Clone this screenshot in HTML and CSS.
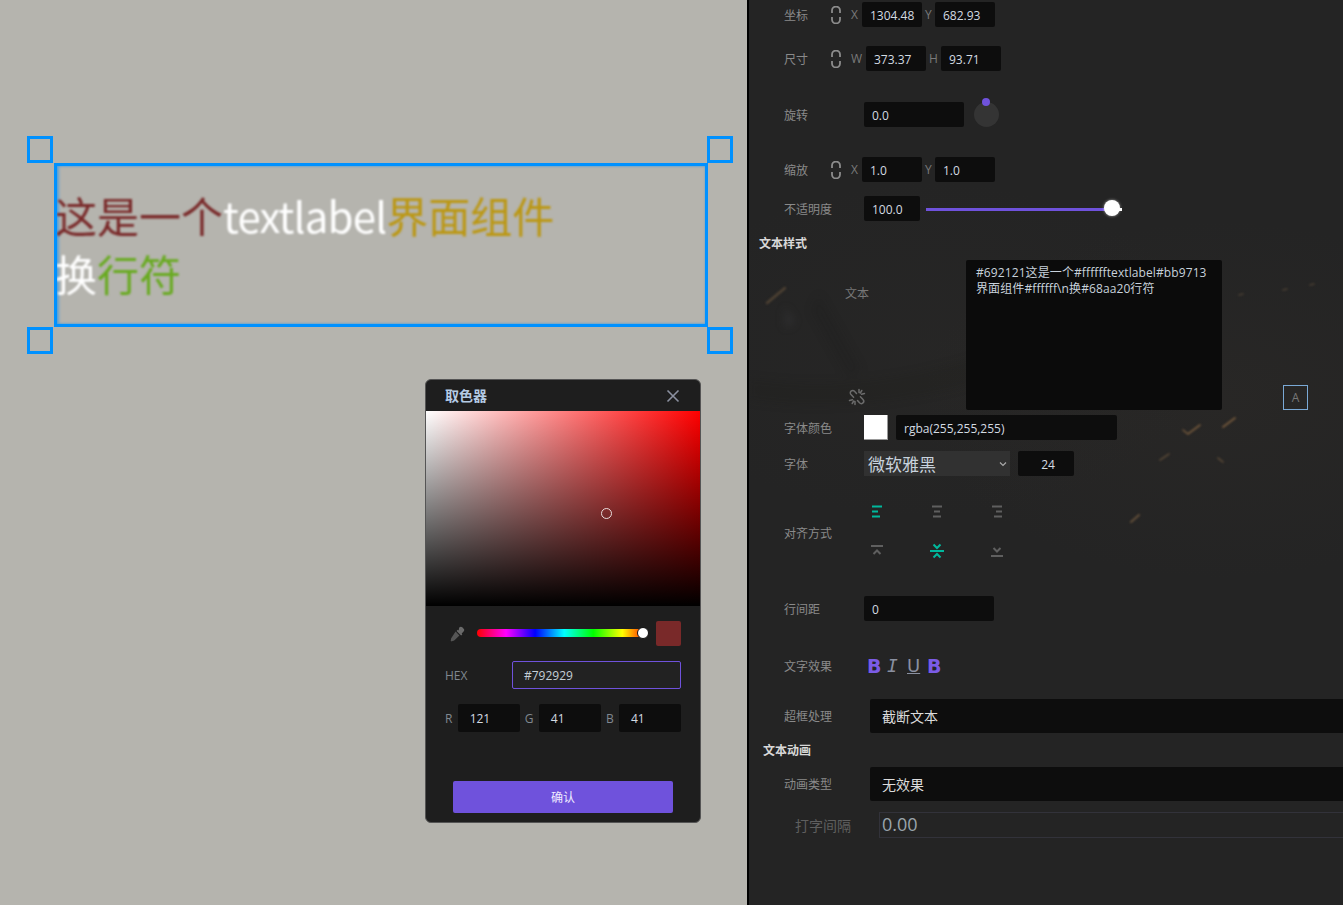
FILE: index.html
```html
<!DOCTYPE html>
<html lang="zh-CN">
<head>
    <meta charset="UTF-8">
    <meta name="viewport" content="width=device-width, initial-scale=1.0">
    <title>文本属性</title>
    <link rel="stylesheet" href="styles.css">
</head>
<body>
    <div class="app">
        <div class="canvas">
            <!-- selected label on the stage -->
            <div class="label-box">
                <p class="label-text"><span class="c-red">这是一个</span><span class="c-white latin">textlabel</span><span class="c-gold">界面组件</span><br><span class="c-white">换</span><span class="c-green">行符</span></p>
            </div>
            <span class="handle handle-tl"></span>
            <span class="handle handle-tr"></span>
            <span class="handle handle-bl"></span>
            <span class="handle handle-br"></span>

            <!-- colour picker window -->
            <div class="picker">
                <div class="picker-head">
                    <span class="picker-title">取色器</span>
                    <svg class="picker-close" width="14" height="14" viewBox="0 0 14 14"><path d="M1.500 1.500l11 11M12.500 1.500l-11 11" stroke="#8b90a0" stroke-width="1.600" fill="none"/></svg>
                </div>
                <div class="sv-area"><span class="sv-cursor"></span></div>
                <div class="picker-body">
                    <div class="hue-row">
                        <svg class="dropper" width="16" height="16" viewBox="0 0 16 16"><path d="M10.200 1.600a2.400 2.400 0 0 1 3.400 0l.8.8a2.400 2.400 0 0 1 0 3.400l-1.700 1.700.6.9-1.200 1.100-4.500-4.500 1.100-1.200.9.6z" fill="#6a6a6a"/><path d="M6.600 5.600l3.800 3.800-4.900 4.900c-.5.500-1.200.7-1.900.7l-1.100.4-.9-.9.4-1.100c0-.7.2-1.400.7-1.900z" fill="#555"/></svg>
                        <div class="hue-bar"><span class="hue-knob"></span></div>
                        <span class="swatch-now"></span>
                    </div>
                    <div class="hex-row">
                        <span class="pick-label">HEX</span>
                        <div class="hex-input">#792929</div>
                    </div>
                    <div class="rgb-row">
                        <span class="pick-label">R</span><div class="rgb-input">121</div>
                        <span class="pick-label">G</span><div class="rgb-input">41</div>
                        <span class="pick-label">B</span><div class="rgb-input">41</div>
                    </div>
                    <button class="confirm">确认</button>
                </div>
            </div>
        </div>

        <div class="panel">
            <svg class="panel-art" width="594" height="320" viewBox="0 0 594 320">
                <g class="art-shapes">
                    <path d="M70 45L112 120L100 128L62 60z" fill="#171513" opacity="0.15"/>
                    <path d="M36 57L46 72L36 78z" fill="#45464a" opacity="0.3"/>
                    <path d="M0 128Q140 150 300 80V110Q140 170 0 150z" fill="#1c1917" opacity="0.15"/>
                </g>
                <g class="art-sparks" fill="none" stroke-linecap="round">
                    <path d="M18 53L36 38" stroke="#4f4233" stroke-width="2.500"/>
                    <path d="M434 180l5 4 12-9" stroke="#75593c" stroke-width="1.600"/>
                    <path d="M474 177l12-9" stroke="#75593c" stroke-width="1.800"/>
                    <path d="M411 210l9-6" stroke="#64503a" stroke-width="1.500"/>
                    <path d="M469 208l5 4" stroke="#64503a" stroke-width="1.500"/>
                    <path d="M382 272l8-7" stroke="#64503a" stroke-width="2"/>
                    <path d="M490 45l4-1M534 40l4-1M561 35l4-1" stroke="#4a4034" stroke-width="1.500"/>
                </g>
            </svg>

            <div class="row row-pos">
                <span class="row-label">坐标</span>
                <svg class="link" width="10" height="18" viewBox="0 0 10 18"><path d="M1 7V4.500a4 4 0 0 1 8 0V7M1 11v2.500a4 4 0 0 0 8 0V11" fill="none" stroke="#8c8c8c" stroke-width="1.800"/></svg>
                <span class="axis">X</span><div class="field f60">1304.48</div>
                <span class="axis axis-y">Y</span><div class="field f60">682.93</div>
            </div>
            <div class="row row-size">
                <span class="row-label">尺寸</span>
                <svg class="link" width="10" height="18" viewBox="0 0 10 18"><path d="M1 7V4.500a4 4 0 0 1 8 0V7M1 11v2.500a4 4 0 0 0 8 0V11" fill="none" stroke="#8c8c8c" stroke-width="1.800"/></svg>
                <span class="axis axis-w">W</span><div class="field f60">373.37</div>
                <span class="axis axis-h">H</span><div class="field f60">93.71</div>
            </div>
            <div class="row row-rotate">
                <span class="row-label">旋转</span>
                <div class="field f100">0.0</div>
                <div class="dial"><span class="dial-dot"></span></div>
            </div>
            <div class="row row-scale">
                <span class="row-label">缩放</span>
                <svg class="link" width="10" height="18" viewBox="0 0 10 18"><path d="M1 7V4.500a4 4 0 0 1 8 0V7M1 11v2.500a4 4 0 0 0 8 0V11" fill="none" stroke="#8c8c8c" stroke-width="1.800"/></svg>
                <span class="axis">X</span><div class="field f60">1.0</div>
                <span class="axis axis-y">Y</span><div class="field f60">1.0</div>
            </div>
            <div class="row row-opacity">
                <span class="row-label">不适明度</span>
                <div class="field f56">100.0</div>
                <div class="slider"><span class="slider-knob"></span></div>
            </div>

            <div class="section section-style">文本样式</div>

            <div class="text-row">
                <div class="text-side">
                    <span class="text-label">文本</span>
                    <svg class="unlink" width="18" height="18" viewBox="0 0 18 18"><g fill="none" stroke="#6b6b6b" stroke-width="1.500" stroke-linecap="round"><path d="M8.500 5.500L6.500 3.200a2.400 2.400 0 0 0-3.500 3.400l2.600 2.600"/><path d="M9.500 12.500l2 2.300a2.400 2.400 0 0 0 3.500-3.400l-2.600-2.600"/><path d="M11 1.500v3M13.800 2.500l-1.500 2.500M16.500 5.500l-3 .8"/><path d="M7 16.500v-3M4.200 15.500l1.500-2.500M1.500 12.500l3-.8"/></g></svg>
                </div>
                <div class="text-area">#692121这是一个#fffffftextlabel#bb9713<br>界面组件#ffffff\n换#68aa20行符</div>
                <span class="a-btn">A</span>
            </div>

            <div class="row row-color">
                <span class="row-label">字体颜色</span>
                <span class="color-swatch"></span>
                <div class="field f221">rgba(255,255,255)</div>
            </div>
            <div class="row row-font">
                <span class="row-label">字体</span>
                <div class="font-select">微软雅黑
                    <svg width="8" height="6" viewBox="0 0 8 6"><path d="M1 1.500l3 3 3-3" fill="none" stroke="#aaa" stroke-width="1.200"/></svg>
                </div>
                <div class="field f56 center">24</div>
            </div>

            <div class="row row-align">
                <span class="row-label">对齐方式</span>
                <div class="align-grid">
                    <svg class="ic on" width="14" height="16" viewBox="0 0 14 16"><path d="M2 2.500h10M2 7.500h6M2 12.500h8"/></svg>
                    <svg class="ic" width="14" height="16" viewBox="0 0 14 16"><path d="M2 2.500h10M4 7.500h6M3 12.500h8"/></svg>
                    <svg class="ic" width="14" height="16" viewBox="0 0 14 16"><path d="M2 2.500h10M6 7.500h6M4 12.500h8"/></svg>
                    <svg class="ic" width="14" height="16" viewBox="0 0 14 16"><path d="M1 3h12M3.500 11l3.500-3.500 3.500 3.500"/></svg>
                    <svg class="ic on" width="16" height="16" viewBox="0 0 16 16"><path d="M1 8h14M4.500 1.500l3.500 3.500 3.500-3.500M4.500 14.500l3.500-3.500 3.500 3.500"/></svg>
                    <svg class="ic" width="14" height="16" viewBox="0 0 14 16"><path d="M1 13h12M3.500 5l3.500 3.500 3.500-3.500"/></svg>
                </div>
            </div>

            <div class="row row-spacing">
                <span class="row-label">行间距</span>
                <div class="field f130">0</div>
            </div>

            <div class="row row-effect">
                <span class="row-label">文字效果</span>
                <div class="effects">
                    <span class="fx fx-on">B</span>
                    <span class="fx fx-i">I</span>
                    <span class="fx fx-u">U</span>
                    <span class="fx fx-on">B</span>
                </div>
            </div>

            <div class="row row-overflow">
                <span class="row-label wide">超框处理</span>
                <div class="wide-field">截断文本</div>
            </div>

            <div class="section section-anim">文本动画</div>

            <div class="row row-anim">
                <span class="row-label wide">动画类型</span>
                <div class="wide-field">无效果</div>
            </div>
            <div class="row row-interval">
                <span class="interval-label">打字间隔</span>
                <div class="interval-field">0.00</div>
            </div>
        </div>
    </div>
</body>
</html>
```
FILE: styles.css
```css
* {
    box-sizing: border-box;
}

html, body {
    margin: 0;
    height: 100%;
    overflow: hidden;
}

body {
    font-family: "Open Sans", "Noto Sans CJK SC", sans-serif;
    font-size: 12px;
    color: #d4dbe2;
}

.app {
    display: flex;
    height: 905px;
}

/* Stage */
.canvas {
    position: relative;
    width: 747px;
    flex: none;
    background-color: #b5b4ae;
}

.label-box {
    position: absolute;
    left: 54px;
    top: 163px;
    width: 654px;
    height: 164px;
    border: 3px solid #0091ff;
    box-shadow: inset 2px 0 3px rgba(0, 145, 255, 0.45), inset 0 0 2px rgba(0, 145, 255, 0.5);
    overflow: hidden;
}

.label-text {
    margin: 20px 0 0 -2px;
    font-family: "Noto Sans CJK SC", sans-serif;
    font-size: 42px;
    line-height: 58px;
    filter: blur(0.8px);
    white-space: nowrap;
}

.latin { letter-spacing: -0.8px; }

.c-red { color: #792929; }
.c-white { color: #fff; }
.c-gold { color: #bb9713; }
.c-green { color: #68aa20; }

.handle {
    position: absolute;
    width: 26px;
    height: 27px;
    border: 3px solid #0091ff;
}

.handle-tl { left: 27px; top: 136px; }
.handle-tr { left: 707px; top: 136px; }
.handle-bl { left: 27px; top: 327px; }
.handle-br { left: 707px; top: 327px; }

/* Colour picker */
.picker {
    position: absolute;
    left: 425px;
    top: 379px;
    width: 276px;
    height: 444px;
    background-color: #1e1e1e;
    border: 1px solid #555;
    border-radius: 6px;
    overflow: hidden;
}

.picker-head {
    display: flex;
    align-items: center;
    justify-content: space-between;
    height: 31px;
    padding: 0 20px 0 19px;
}

.picker-title {
    margin-top: -2px;
    font-size: 14px;
    font-weight: 700;
    font-family: "Noto Sans CJK SC", sans-serif;
    color: #b4cbe4;
}

.sv-area {
    position: relative;
    height: 195px;
    background:
        linear-gradient(to bottom, rgba(0, 0, 0, 0), #000),
        linear-gradient(to right, #fff, #f00);
}

.sv-cursor {
    position: absolute;
    left: 175px;
    top: 97px;
    width: 11px;
    height: 11px;
    border: 1px solid #e9dcdc;
    border-radius: 50%;
}

.picker-body {
    padding: 15px 19px 0;
}

.hue-row {
    display: flex;
    align-items: center;
    height: 25px;
}

.dropper {
    margin-left: 4px;
    flex: none;
}

.hue-bar {
    position: relative;
    width: 171px;
    height: 8px;
    margin: -1px 0 0 12px;
    border-radius: 4px;
    background: linear-gradient(to right, #f00, #f0f 17%, #00f 34%, #0ff 51%, #0f0 68%, #ff0 85%, #f00);
}

.hue-knob {
    position: absolute;
    right: -1px;
    top: -2px;
    width: 12px;
    height: 12px;
    background-color: #fff;
    border: 1px solid #111;
    border-radius: 50%;
}

.swatch-now {
    width: 25px;
    height: 25px;
    margin-left: 8px;
    background-color: #792929;
    border-radius: 2px;
}

.hex-row {
    display: flex;
    align-items: center;
    justify-content: space-between;
    margin-top: 15px;
}

.pick-label {
    color: #808890;
}

.hex-input {
    width: 169px;
    height: 28px;
    padding-left: 11px;
    line-height: 28px;
    color: #c5cfd8;
    background-color: #222;
    border: 1px solid #6f52dc;
    border-radius: 2px;
}

.rgb-row {
    display: flex;
    align-items: center;
    justify-content: space-between;
    margin-top: 15px;
}

.rgb-input {
    width: 62px;
    height: 28px;
    padding-left: 12px;
    line-height: 30px;
    color: #d4dbe2;
    background-color: #0d0d0d;
    border-radius: 2px;
}

.confirm {
    display: block;
    width: 220px;
    height: 32px;
    margin: 49px 0 0 8px;
    padding: 0 0 2px;
    border: none;
    border-radius: 2px;
    background-color: #6f52dc;
    color: #f0ecff;
    font-family: "Noto Sans CJK SC", sans-serif;
    font-size: 12px;
}

/* Property panel */
.panel {
    position: relative;
    flex: 1;
    overflow: hidden;
    border-left: 2px solid #000;
    padding-top: 2px;
    background-color: #242424;
    background-image:
        radial-gradient(ellipse 300px 180px at 470px 400px, rgba(70, 60, 50, 0.12), rgba(70, 60, 50, 0)),
        radial-gradient(ellipse 280px 170px at 180px 350px, rgba(60, 55, 50, 0.1), rgba(60, 55, 50, 0));
}

.panel-art {
    position: absolute;
    left: 0;
    top: 250px;
}

.art-shapes {
    filter: blur(4px);
}

.art-sparks {
    filter: blur(1px);
}

.row {
    position: relative;
    display: flex;
    align-items: center;
    height: 25px;
    padding-left: 35px;
}

.row-label {
    flex: none;
    width: 80px;
    color: #8a8a8a;
}

.row-label.wide {
    width: 86px;
}

.link {
    flex: none;
    margin-left: -33px;
}

.axis {
    width: 11px;
    margin-left: 10px;
    color: #7a7a7a;
}

.axis-y {
    margin-left: 3px;
    width: 10px;
}

.axis-w {
    width: 15px;
}

.axis-h {
    margin-left: 3px;
    width: 12px;
}

.field {
    flex: none;
    height: 25px;
    padding-left: 8px;
    line-height: 27px;
    overflow: hidden;
    background-color: #0d0d0d;
    border-radius: 2px;
}

.field.center {
    padding-left: 4px;
    text-align: center;
}

.f56 { width: 56px; }
.f60 { width: 60px; }
.f100 { width: 100px; }
.f130 { width: 130px; }
.f221 { width: 221px; }

.row-size { margin-top: 19px; }
.row-rotate { margin-top: 31px; }
.row-scale { margin-top: 30px; }
.row-opacity { margin-top: 14px; }

.dial {
    position: relative;
    width: 25px;
    height: 25px;
    margin-left: 10px;
    border-radius: 50%;
    background-color: #343434;
}

.dial-dot {
    position: absolute;
    left: 8px;
    top: -4px;
    width: 8px;
    height: 8px;
    border-radius: 50%;
    background-color: #6f52dc;
}

.slider {
    position: relative;
    width: 196px;
    height: 3px;
    margin: 1px 0 0 6px;
    background: linear-gradient(to right, #6f52dc 190px, #fff 190px);
}

.slider-knob {
    position: absolute;
    right: 2px;
    top: -8px;
    width: 16px;
    height: 16px;
    border-radius: 50%;
    background-color: #fff;
    box-shadow: 0 0 3px rgba(255, 255, 255, 0.6);
}

.section {
    position: relative;
    font-family: "Noto Sans CJK SC", sans-serif;
    font-weight: 700;
    color: #d8d8d8;
    line-height: 16px;
}

.section-style {
    margin: 14px 0 0 10px;
}

.section-anim {
    margin: 9px 0 0 14px;
}

.text-row {
    position: relative;
    display: flex;
    height: 150px;
    margin-top: 9px;
}

.text-side {
    position: relative;
    width: 217px;
    padding-left: 96px;
}

.text-label {
    display: block;
    margin-top: 24px;
    color: #777;
}

.unlink {
    position: absolute;
    left: 99px;
    top: 128px;
}

.text-area {
    width: 256px;
    height: 150px;
    padding: 5px 10px;
    line-height: 16px;
    letter-spacing: 0.1px;
    color: #c8d2dc;
    background-color: #0b0b0b;
    border-radius: 2px;
    white-space: nowrap;
}

.a-btn {
    width: 25px;
    height: 25px;
    margin: 125px 0 0 61px;
    line-height: 23px;
    text-align: center;
    color: #777;
    border: 1px solid #7aa9d6;
}

.row-color { margin-top: 5px; }
.row-font { margin-top: 11px; }

.color-swatch {
    width: 24px;
    height: 25px;
    margin-right: 8px;
    background-color: #fff;
    border-right: 1px solid #999;
    border-bottom: 1px solid #999;
}

.font-select {
    display: flex;
    align-items: center;
    justify-content: space-between;
    width: 146px;
    height: 25px;
    margin-right: 8px;
    padding: 0 3px 0 4px;
    font-family: "Noto Sans CJK SC", sans-serif;
    font-size: 17px;
    color: #c8d2dc;
    background-color: #313131;
}

.row-align {
    height: 55px;
    margin-top: 28px;
}

.row-align .row-label {
    margin-top: 2px;
}

.align-grid {
    display: grid;
    grid-template-columns: repeat(3, 60px);
    grid-template-rows: 16px 16px;
    row-gap: 23px;
    margin-left: -1px;
}

.ic {
    justify-self: center;
    margin-left: -33px;
    fill: none;
    stroke: #5f5f5f;
    stroke-width: 2;
}

.ic.on {
    stroke: #00b89c;
}

.row-spacing { margin-top: 37px; }
.row-effect { margin-top: 32px; }

.effects {
    display: flex;
    align-items: center;
    margin-left: 3px;
    font-family: "DejaVu Sans", sans-serif;
    font-size: 19px;
    line-height: 20px;
}

.fx {
    color: #8a90a0;
    width: 20px;
}

.fx-on {
    color: #7b5ce6;
    font-weight: 700;
}

.fx-i {
    font-family: "DejaVu Sans Mono", monospace;
    font-size: 18px;
    font-style: italic;
}

.fx-u {
    font-size: 18px;
    text-decoration: underline;
    text-underline-offset: 1px;
}

.row-overflow {
    height: 34px;
    margin-top: 21px;
}

.row-anim {
    height: 34px;
    margin-top: 9px;
}

.wide-field {
    width: 600px;
    height: 34px;
    padding-left: 12px;
    flex: none;
    font-family: "Noto Sans CJK SC", sans-serif;
    font-size: 14px;
    line-height: 34px;
    color: #dcdcdc;
    background-color: #0d0d0d;
    border-radius: 2px;
}

.row-interval {
    height: 26px;
    margin-top: 11px;
    padding-left: 46px;
}

.interval-label {
    width: 84px;
    flex: none;
    font-size: 14px;
    color: #5f5f5f;
}

.interval-field {
    width: 600px;
    height: 26px;
    flex: none;
    padding-left: 2px;
    font-size: 18px;
    line-height: 23px;
    color: #9aa4ac;
    border: 1px solid #32323a;
}
```
